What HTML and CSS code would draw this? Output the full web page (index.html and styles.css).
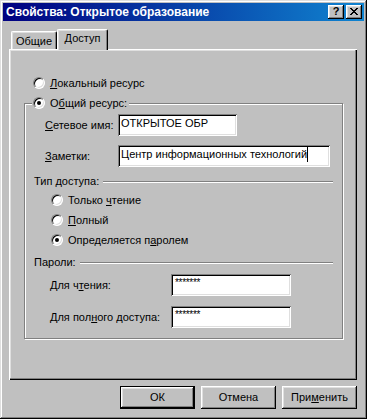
FILE: index.html
```html
<!DOCTYPE html>
<html>
<head>
<meta charset="utf-8">
<title>Свойства: Открытое образование</title>
<link rel="stylesheet" href="styles.css">
</head>
<body>
<div class="window">
  <div class="titlebar">
    <span class="title">Свойства: Открытое образование</span>
    <div class="tbtns">
      <div class="tbtn help">?</div>
      <div class="tbtn close">
        <svg width="8" height="7" viewBox="0 0 8 7" shape-rendering="crispEdges"><path fill="#000" d="M0 0h2v1H0zM6 0h2v1H6zM1 1h2v1H1zM5 1h2v1H5zM2 2h4v1H2zM3 3h2v1H3zM2 4h4v1H2zM1 5h2v1H1zM5 5h2v1H5zM0 6h2v1H0zM6 6h2v1H6z"/></svg>
      </div>
    </div>
  </div>
  <div class="body">
    <div class="tabs">
      <div class="tab">Общие</div>
      <div class="tab active">Доступ</div>
    </div>
    <div class="panel">
      <div class="r-local"><span class="radio"></span><span><u>Л</u>окальный ресурс</span></div>
      <div class="group">
        <div class="legend"><span class="radio on"></span><span>О<u>б</u>щий ресурс:</span></div>
        <div class="frow"><span class="flabel"><u>С</u>етевое имя:</span><div class="field w-name">ОТКРЫТОЕ ОБР</div></div>
        <div class="frow r-notes"><span class="flabel"><u>З</u>аметки:</span><div class="field w-notes">Центр информационных технологий<span class="caret"></span></div></div>
        <div class="sep s-type"><span>Тип доступа:</span><span class="line"></span></div>
        <div class="rrow first"><span class="radio"></span><span>Только <u>ч</u>тение</span></div>
        <div class="rrow"><span class="radio"></span><span><u>П</u>олный</span></div>
        <div class="rrow"><span class="radio on"></span><span>Определяется п<u>а</u>ролем</span></div>
        <div class="sep s-pass"><span>Пароли:</span><span class="line"></span></div>
        <div class="prow p-read"><span class="plabel">Для ч<u>т</u>ения:</span><div class="field pass">*******</div></div>
        <div class="prow p-full"><span class="plabel">Для пол<u>н</u>ого доступа:</span><div class="field pass">*******</div></div>
      </div>
    </div>
    <div class="btns">
      <div class="btn default">ОК</div>
      <div class="btn">Отмена</div>
      <div class="btn">При<u>м</u>енить</div>
    </div>
  </div>
</div>
</body>
</html>
```

FILE: styles.css
```css
* { box-sizing: border-box; }
body {
  margin: 0;
  font-family: "Liberation Sans", Arial, sans-serif;
  font-size: 11px;
  line-height: 13px;
  color: #000;
  background: #c0c0c0;
}
u { text-decoration: underline; text-underline-offset: 1px; }

.window {
  width: 367px;
  height: 419px;
  padding: 3px;
  background: #c0c0c0;
  box-shadow: inset -1px -1px #000, inset 1px 1px #dfdfdf, inset -2px -2px #808080, inset 2px 2px #fff;
  display: flex;
  flex-direction: column;
}

.titlebar {
  height: 18px;
  display: flex;
  align-items: center;
  justify-content: space-between;
  padding: 0 2px 0 3px;
  background: linear-gradient(90deg, #000080, #1084d0);
}
.title {
  color: #fff;
  font-weight: bold;
  font-size: 12px;
  white-space: nowrap;
}
.tbtns { display: flex; gap: 2px; }
.tbtn {
  width: 16px;
  height: 14px;
  background: #c0c0c0;
  box-shadow: inset -1px -1px #000, inset 1px 1px #fff, inset -2px -2px #808080, inset 2px 2px #dfdfdf;
  display: flex;
  align-items: center;
  justify-content: center;
}
.help { font-weight: bold; font-size: 11px; line-height: 11px; padding-bottom: 1px; }
.close svg { display: block; margin-left: -1px; margin-top: -1px; }

.body {
  flex: 1;
  display: flex;
  flex-direction: column;
  padding: 8px 7px 7px 6px;
}

.tabs {
  height: 20px;
  display: flex;
  align-items: flex-end;
  padding-left: 2px;
}
.tab {
  width: 46px;
  height: 18px;
  border: 1px solid;
  border-color: #fff #000 transparent #fff;
  border-bottom: none;
  border-radius: 2px 2px 0 0;
  box-shadow: inset -1px 0 #808080, inset 1px 1px #dfdfdf;
  text-align: center;
  padding-top: 3px;
  background: #c0c0c0;
}
.tab.active {
  width: 51px;
  height: 21px;
  margin-bottom: -1px;
  padding-top: 2px;
  position: relative;
  z-index: 1;
}

.panel {
  flex: 1;
  background: #c0c0c0;
  box-shadow: inset 1px 1px #fff, inset -1px -1px #000, inset -2px -2px #808080, inset 2px 2px #dfdfdf;
  display: flex;
  flex-direction: column;
}

.radio {
  flex: none;
  position: relative;
  width: 12px;
  height: 12px;
  border-radius: 50%;
  background: #fff;
  border: 1px solid;
  border-color: #808080 #fff #fff #808080;
  box-shadow: inset 1px 1px #000, inset -1px -1px #dfdfdf;
}
.radio.on::after {
  content: "";
  position: absolute;
  left: 3px;
  top: 3px;
  width: 4px;
  height: 4px;
  border-radius: 50%;
  background: #000;
}

.r-local {
  display: flex;
  align-items: center;
  gap: 5px;
  height: 12px;
  margin: 28px 0 0 24px;
}

.group {
  position: relative;
  width: 319px;
  margin: 14px 0 0 15px;
  border: 1px solid #808080;
  box-shadow: inset 1px 1px #fff, 1px 1px #fff;
  padding: 10px 0 10px 0;
  display: flex;
  flex-direction: column;
}
.legend {
  position: absolute;
  top: -7px;
  left: 7px;
  height: 12px;
  display: flex;
  align-items: center;
  gap: 5px;
  padding: 0 2px 0 1px;
  background: #c0c0c0;
  white-space: nowrap;
}

.frow {
  display: flex;
  align-items: center;
  margin-left: 20px;
}
.r-notes { margin-top: 9px; }
.flabel { width: 73px; }

.field {
  height: 22px;
  background: #fff;
  box-shadow: inset 1px 1px #808080, inset -1px -1px #fff, inset 2px 2px #000, inset -2px -2px #dfdfdf;
  padding: 3px 3px 0 3px;
  white-space: nowrap;
  overflow: hidden;
  display: flex;
  align-items: flex-start;
}
.w-name { width: 119px; }
.w-notes { width: 212px; }
.caret {
  display: inline-block;
  width: 1px;
  height: 15px;
  background: #000;
  margin-top: -1px;
}

.sep {
  display: flex;
  align-items: center;
  height: 13px;
  margin: 0 9px 0 9px;
}
.s-type { margin-top: 8px; }
.s-pass { margin-top: 6px; }
.sep .line {
  flex: 1;
  height: 2px;
  border-top: 1px solid #808080;
  border-bottom: 1px solid #fff;
  margin-left: 4px;
}

.rrow {
  display: flex;
  align-items: center;
  gap: 5px;
  height: 20px;
  margin-left: 26px;
}
.rrow.first { margin-top: 2px; }

.prow {
  display: flex;
  align-items: center;
  margin-left: 25px;
}
.p-read { margin-top: 5px; }
.p-full { margin-top: 10px; }
.plabel { width: 121px; }
.pass {
  width: 120px;
  padding-top: 2px;
  padding-left: 4px;
  font-size: 10px;
  letter-spacing: -0.3px;
}

.btns {
  display: flex;
  justify-content: flex-end;
  gap: 6px;
  margin-top: 6px;
}
.btn {
  width: 75px;
  height: 23px;
  display: flex;
  align-items: center;
  justify-content: center;
  background: #c0c0c0;
  box-shadow: inset -1px -1px #000, inset 1px 1px #fff, inset -2px -2px #808080, inset 2px 2px #dfdfdf;
}
.btn.default {
  border: 1px solid #000;
}
```
